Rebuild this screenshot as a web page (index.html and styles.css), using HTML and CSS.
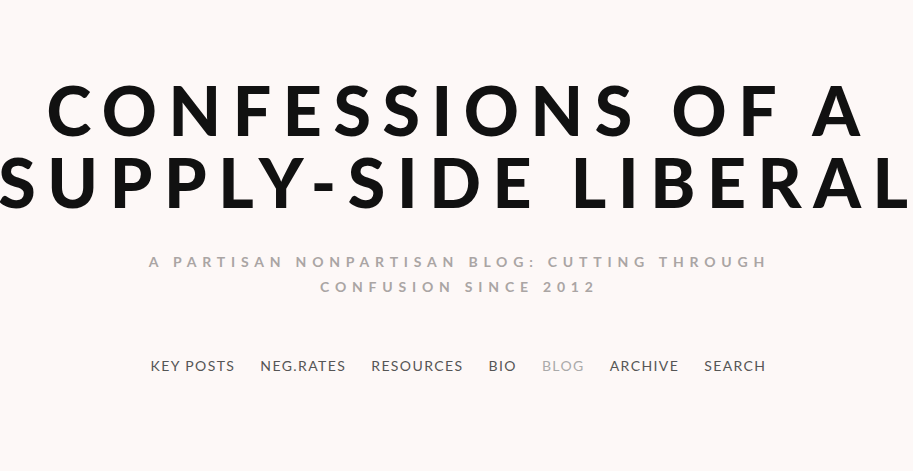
FILE: index.html
```html
<!DOCTYPE html>
<html>
<head>
<meta charset="utf-8">
<link rel="stylesheet" href="styles.css">
</head>
<body>
<header class="site-header">
  <h1 class="site-title">CONFESSIONS OF A<br>SUPPLY-SIDE LIBERAL</h1>
  <p class="site-tagline">A PARTISAN NONPARTISAN BLOG: CUTTING THROUGH<br>CONFUSION SINCE 2012</p>
  <nav class="site-nav">
    <a class="nav-link">KEY POSTS</a>
    <a class="nav-link">NEG.RATES</a>
    <a class="nav-link">RESOURCES</a>
    <a class="nav-link">BIO</a>
    <a class="nav-link nav-link-active">BLOG</a>
    <a class="nav-link">ARCHIVE</a>
    <a class="nav-link">SEARCH</a>
  </nav>
</header>
</body>
</html>
```
FILE: styles.css
```css
html, body {
  margin: 0;
  padding: 0;
  background: #fdf8f7;
}
body {
  font-family: Lato, "Liberation Sans", sans-serif;
  width: 913px;
  height: 471px;
  overflow: hidden;
}
.site-header {
  display: flex;
  flex-direction: column;
  align-items: center;
  padding-top: 74px;
}
.site-title {
  margin: 0;
  padding-left: 5px;
  font-size: 68px;
  font-weight: 900;
  line-height: 72px;
  letter-spacing: 11.6px;
  color: #111;
  text-align: center;
  white-space: nowrap;
}
.site-tagline {
  margin: 31px 0 0;
  padding-left: 5.8px;
  font-size: 14px;
  font-weight: 700;
  line-height: 25px;
  letter-spacing: 5.8px;
  color: #aaa5a4;
  text-align: center;
}
.site-nav {
  display: flex;
  gap: 25px;
  margin-top: 58px;
  padding-left: 4px;
}
.nav-link {
  font-size: 14px;
  letter-spacing: 0.1em;
  color: #555;
}
.nav-link-active {
  color: #aaa;
}
```
